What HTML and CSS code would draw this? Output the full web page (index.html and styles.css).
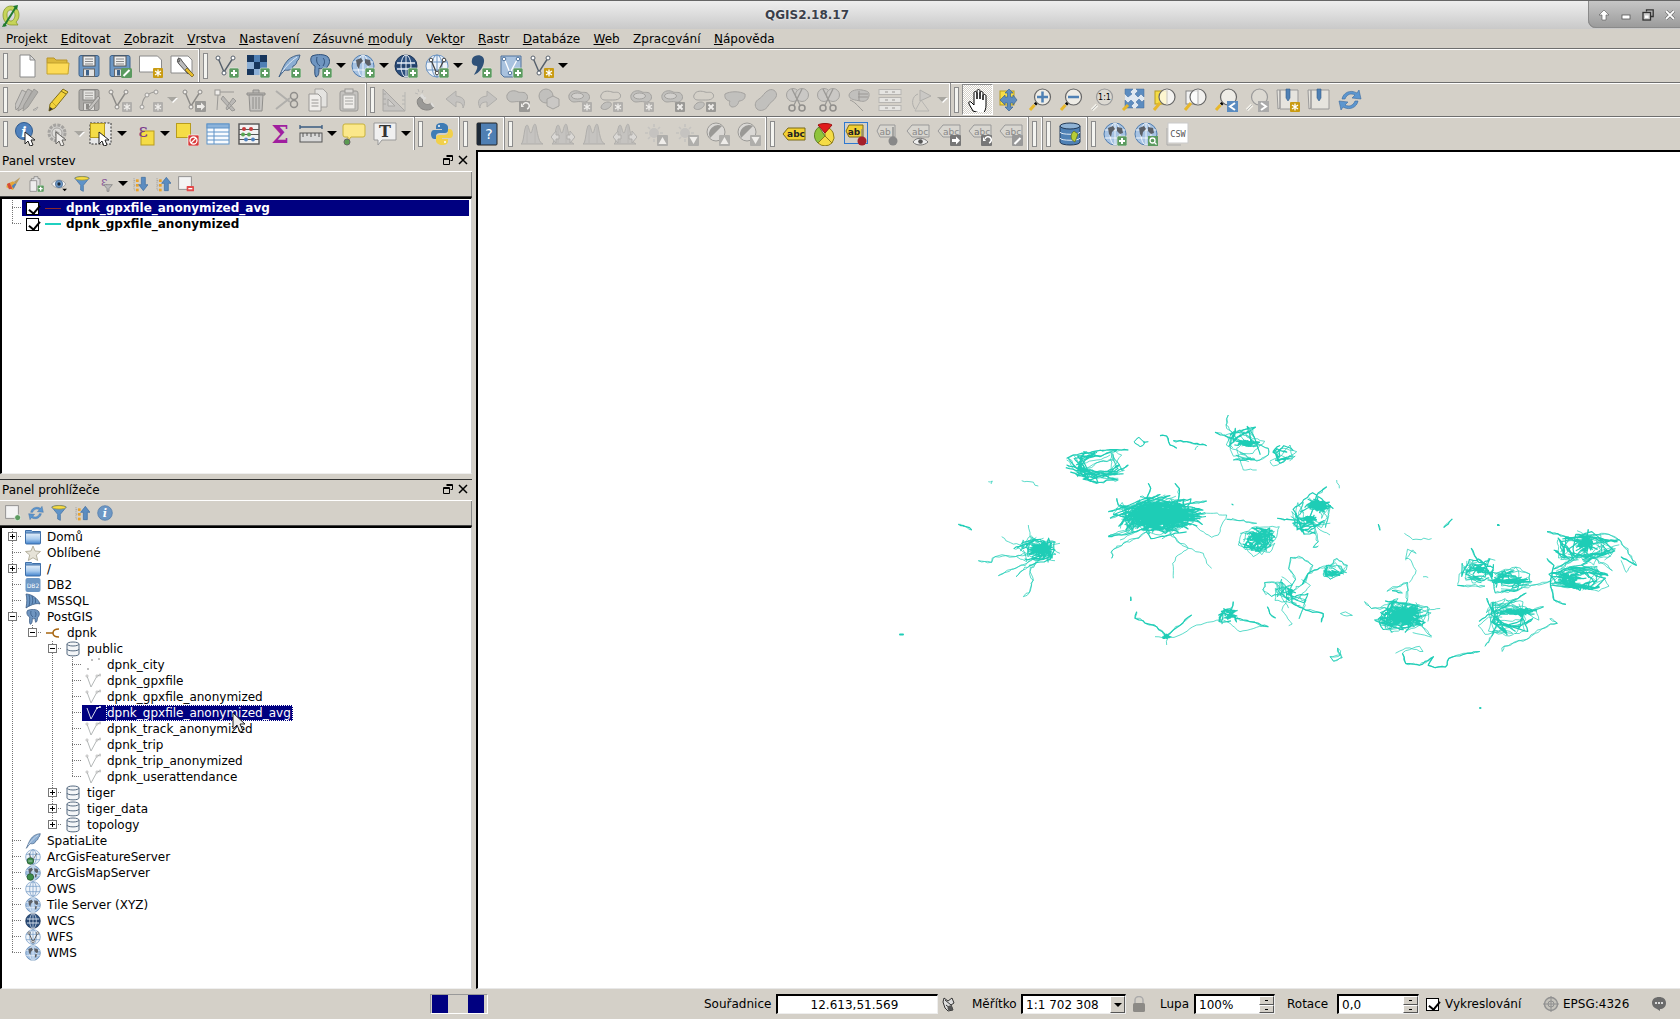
FILE: index.html
```html
<!DOCTYPE html>
<html lang="cs">
<head>
<meta charset="utf-8">
<title>QGIS2.18.17</title>
<link rel="stylesheet" href="styles.css">
</head>
<body>
<svg class="sprite" xmlns="http://www.w3.org/2000/svg">
<defs>
<symbol id="bplus" viewBox="0 0 24 24"><rect x="14" y="14" width="10" height="10" rx="1.5" fill="#5b9a5f" stroke="#e8efe8" stroke-width=".6"/><path d="M19 16v6M16 19h6" stroke="#fff" stroke-width="2"/></symbol>
<symbol id="bstar" viewBox="0 0 24 24"><rect x="14" y="14" width="10" height="10" rx="1" fill="#c99b12"/><path d="M19 15.5v7M16 17l6 4M22 17l-6 4" stroke="#fff" stroke-width="1.3"/></symbol>
<symbol id="bpen" viewBox="0 0 24 24"><rect x="13" y="14" width="11" height="10" rx="1.5" fill="#5b9a5f"/><path d="M15.5 22l6-6" stroke="#fff" stroke-width="2"/></symbol>
<symbol id="bx" viewBox="0 0 24 24"><rect x="14" y="14" width="10" height="10" rx="1" fill="#777"/><path d="M16.5 16.500l5 5M21.500 16.500l-5 5" stroke="#fff" stroke-width="2"/></symbol>
<symbol id="barrow" viewBox="0 0 24 24"><rect x="13" y="13" width="11" height="11" rx="1" fill="#777"/><path d="M15 17h4v-2.500l4 4-4 4V20h-4z" fill="#fff"/></symbol>
<symbol id="bundo" viewBox="0 0 24 24"><rect x="13" y="13" width="11" height="11" rx="1" fill="#777"/><path d="M21 21a3.200 3.200 0 1 0-4-4" fill="none" stroke="#fff" stroke-width="1.600"/><path d="M15 15v4h3z" fill="#fff"/></symbol>
<symbol id="bup" viewBox="0 0 24 24"><rect x="13" y="13" width="11" height="11" rx="1" fill="#999"/><path d="M18.500 15l4 7h-8z" fill="#fff"/></symbol>
<symbol id="bdown" viewBox="0 0 24 24"><rect x="13" y="13" width="11" height="11" rx="1" fill="#999"/><path d="M18.500 22l4-7h-8z" fill="#fff"/></symbol>
<symbol id="new" viewBox="0 0 24 24"><path d="M5 1h10l5 5v17H5z" fill="#fff" stroke="#8a8a8a"/><path d="M15 1v5h5z" fill="#ddd" stroke="#8a8a8a"/></symbol>
<symbol id="open" viewBox="0 0 24 24"><path d="M1 9V4h7l2 2h11v4z" fill="#dcb93c" stroke="#b8952a"/><path d="M1 20V9h22l-1 11z" fill="#fddb57" stroke="#c4a32e"/></symbol>
<symbol id="save" viewBox="0 0 24 24"><rect x="2" y="1.500" width="20" height="21" rx="2" fill="#6d97c4" stroke="#3f638b"/><rect x="6" y="2" width="12" height="10" fill="#eee" stroke="#555"/><path d="M8 5h8M8 7.500h8M8 10h8" stroke="#888"/><rect x="6.500" y="15" width="11" height="7.500" fill="#e2e2e2" stroke="#666"/><rect x="9" y="16" width="3" height="5.500" fill="#3f638b"/></symbol>
<symbol id="saveas" viewBox="0 0 24 24"><use href="#save"/><use href="#bpen"/></symbol>
<symbol id="compnew" viewBox="0 0 24 24"><path d="M0.500 2h18l4 4v12H.5z" fill="#fff" stroke="#8a8a8a"/><use href="#bstar"/></symbol>
<symbol id="compman" viewBox="0 0 24 24"><path d="M1 2h17l4 4v13H1z" fill="#fff" stroke="#8a8a8a"/><path d="M8 5a4 4 0 0 0 1 5l9 10 3-2-9-11a4 4 0 0 0-4-3l2 3-2 1z" fill="#bbb" stroke="#555"/><path d="M15 16l7 7 2-2-7-7z" fill="#e7bd2e" stroke="#6d5a17" stroke-width=".7"/></symbol>
<symbol id="vline" viewBox="0 0 24 24"><path d="M3 4l6 14 9-14" fill="none" stroke="#56606c" stroke-width="1.400"/><circle cx="3" cy="4" r="2" fill="#fff" stroke="#56606c"/><circle cx="9" cy="19" r="2" fill="#fff" stroke="#56606c"/><circle cx="18" cy="4" r="2" fill="#fff" stroke="#56606c"/></symbol>
<symbol id="vplus" viewBox="0 0 24 24"><use href="#vline"/><use href="#bplus"/></symbol>
<symbol id="vstar" viewBox="0 0 24 24"><use href="#vline"/><use href="#bstar"/></symbol>
<symbol id="varrow" viewBox="0 0 24 24"><use href="#vline"/><use href="#barrow"/></symbol>
<symbol id="raster" viewBox="0 0 24 24"><rect x="1" y="1" width="20" height="20" fill="#8db0d6"/><path d="M1 1h7v7H1zM14 1h7v7h-7zM8 8h6v7H8zM1 15h7v6H1z" fill="#17365d"/><path d="M8 1h6v7H8zM14 8h7v7h-7z" fill="#4f7fb4"/></symbol>
<symbol id="rasterp" viewBox="0 0 24 24"><use href="#raster"/><use href="#bplus"/></symbol>
<symbol id="feather" viewBox="0 0 24 24"><path d="M2 23C5 16 7 10 11 6c3-3 8-5 12-5-1 3-1 5-3 6 0 3-3 5-4 5 0 3-4 5-8 4-2 2-4 4-6 7z" fill="#8caed3" stroke="#39597f" stroke-width=".9"/><path d="M5 18c4-6 9-11 15-15" stroke="#dfe9f3" fill="none"/></symbol>
<symbol id="featherp" viewBox="0 0 24 24"><use href="#feather"/><use href="#bplus"/></symbol>
<symbol id="pg" viewBox="0 0 24 24"><path d="M4 2c5-2 13-2 16 1 3 4 1 8-1 10-1 3 0 6-3 7-1-2-1-4-1-6-2 1-3 1-4 0 0 4 0 8-3 9-2-2-1-8-1-11C4 11 1 6 4 2z" fill="#6f95c0" stroke="#2e4f78"/><path d="M9 3c-1 4 0 7 3 9M15 4c2 2 2 5 0 8" stroke="#2e4f78" fill="none"/></symbol>
<symbol id="pgp" viewBox="0 0 24 24"><use href="#pg"/><use href="#bplus"/></symbol>
<symbol id="globe" viewBox="0 0 24 24"><circle cx="12" cy="12" r="11" fill="#a7c3e3" stroke="#4f7cae"/><ellipse cx="12" cy="12" rx="5" ry="11" fill="none" stroke="#fff" stroke-width=".8"/><path d="M1.500 8h21M1.500 16h21M12 1v22" stroke="#fff" stroke-width=".8"/><path d="M5 6l5-2 2 3-3 3-1 5-2-3zM14 5l5 1 1 5-3 1-3-3zM15 14l3 0-1 4-2 1z" fill="#5b5f66"/></symbol>
<symbol id="globep" viewBox="0 0 24 24"><use href="#globe"/><use href="#bplus"/></symbol>
<symbol id="globedk" viewBox="0 0 24 24"><circle cx="12" cy="12" r="11" fill="#2c4f7d" stroke="#1d3557"/><path d="M2 12h20" stroke="#1d3557"/><path d="M3 9h18M3 15h18" stroke="#e6edf5" stroke-width="1.300"/><ellipse cx="12" cy="12" rx="5" ry="11" fill="none" stroke="#e6edf5"/><path d="M12 1v22" stroke="#e6edf5"/></symbol>
<symbol id="globedkp" viewBox="0 0 24 24"><use href="#globedk"/><use href="#bplus"/></symbol>
<symbol id="globew" viewBox="0 0 24 24"><circle cx="12" cy="12" r="11" fill="#eef3f9" stroke="#6d95c3"/><ellipse cx="12" cy="12" rx="5" ry="11" fill="none" stroke="#6d95c3"/><path d="M1.500 8h21M1.500 16h21M12 1v22" stroke="#6d95c3"/></symbol>
<symbol id="globev" viewBox="0 0 24 24"><use href="#globew"/><path d="M6 6l6 14 7-14" fill="none" stroke="#444" stroke-width="1.300"/><circle cx="6" cy="6" r="1.800" fill="#fff" stroke="#444"/><circle cx="12" cy="19" r="1.800" fill="#fff" stroke="#444"/><circle cx="19" cy="6" r="1.800" fill="#fff" stroke="#444"/></symbol>
<symbol id="globevp" viewBox="0 0 24 24"><use href="#globev"/><use href="#bplus"/></symbol>
<symbol id="comma" viewBox="0 0 24 24"><path d="M7 2c5-2 10 1 9 6-1 6-5 11-10 13 2-4 4-7 3-9-4 0-6-3-5-6 0-2 1-3 3-4z" fill="#2f5178"/></symbol>
<symbol id="commap" viewBox="0 0 24 24"><use href="#comma"/><use href="#bplus"/></symbol>
<symbol id="shield" viewBox="0 0 24 24"><path d="M2 2h20v15l-8 6H5l-3-3z" fill="#a9c2de" stroke="#50739c"/><path d="M5 4l6 15 8-15" fill="none" stroke="#fff" stroke-width="1.300"/><circle cx="5" cy="5" r="1.800" fill="#fff" stroke="#50739c"/><circle cx="11" cy="19" r="1.800" fill="#fff" stroke="#50739c"/><circle cx="19" cy="5" r="1.800" fill="#fff" stroke="#50739c"/></symbol>
<symbol id="shieldp" viewBox="0 0 24 24"><use href="#shield"/><use href="#bplus"/></symbol>
<symbol id="pencil" viewBox="0 0 24 24"><path d="M17 1l5 3-13 16-6 3 1-7z" fill="#f2d23c" stroke="#7e6d1d"/><path d="M15 3l5 3" stroke="#7e6d1d"/><path d="M6 14l4 4" stroke="#c5a723"/><path d="M3 23l1-4 3 2z" fill="#333"/></symbol>
<symbol id="pencils" viewBox="0 0 24 24"><path d="M13 1l4 2-9 17-5 3 0-6z" fill="#aaa" stroke="#777"/><path d="M19 1l4 3-10 15-5 4 1-6z" fill="#999" stroke="#777"/><path d="M7 2l4 2-7 15-3 3-1-5z" fill="#bbb" stroke="#777"/><path d="M18 22l5-3-2 3z" fill="#fff" stroke="#888"/></symbol>
<symbol id="savepen" viewBox="0 0 24 24"><use href="#save"/><path d="M23 10l-9 11-3 1 1-3 9-11z" fill="#bbb" stroke="#666"/></symbol>
<symbol id="curve" viewBox="0 0 24 24"><path d="M3 19c0-8 4-13 12-15" fill="none" stroke="#777" stroke-width="1.200"/><circle cx="3" cy="19" r="2" fill="#fff" stroke="#777"/><circle cx="8" cy="7" r="2" fill="#fff" stroke="#777"/><circle cx="17" cy="4" r="2" fill="#fff" stroke="#777"/><use href="#bstar"/></symbol>
<symbol id="nodetool" viewBox="0 0 24 24"><rect x="2" y="2" width="5" height="5" fill="#fff" stroke="#777"/><path d="M5 7l-1 15M7 4h14" stroke="#777" fill="none"/><path d="M10 8l12 14-3 1L8 11zM13 20l7-10 3 3-9 9z" fill="#aaa" stroke="#777"/></symbol>
<symbol id="trash" viewBox="0 0 24 24"><path d="M3 5h18v2H3zM9 5V2h6v3" fill="#aaa" stroke="#666"/><path d="M5 7h14l-1 16H6z" fill="#bbb" stroke="#666"/><path d="M9 9v12M12 9v12M15 9v12" stroke="#666"/></symbol>
<symbol id="scissors" viewBox="0 0 24 24"><path d="M1 3l14 11M1 21L15 10" stroke="#9a9a9a" stroke-width="2"/><circle cx="19" cy="8" r="3.500" fill="none" stroke="#666" stroke-width="1.500"/><circle cx="19" cy="16" r="3.500" fill="none" stroke="#666" stroke-width="1.500"/></symbol>
<symbol id="copy" viewBox="0 0 24 24"><path d="M9 1h8l4 4v14H9z" fill="#eee" stroke="#888"/><path d="M3 6h9l3 3v14H3z" fill="#fff" stroke="#777"/><path d="M5.500 12h7M5.500 15h7M5.500 18h7" stroke="#777"/></symbol>
<symbol id="paste" viewBox="0 0 24 24"><rect x="3" y="3" width="18" height="20" rx="2" fill="#bbb" stroke="#777"/><rect x="8" y="1" width="8" height="4" fill="#ddd" stroke="#777"/><rect x="6" y="7" width="12" height="14" fill="#fff" stroke="#888"/><path d="M8 10h8M8 13h8M8 16h8" stroke="#888"/></symbol>
<symbol id="tri" viewBox="0 0 24 24"><path d="M1 1v22h22z" fill="#c0bdb6" stroke="#8e8e8e"/><path d="M6 11v7h7z" fill="#d4d0c8" stroke="#8e8e8e"/><path d="M1 6h3M1 11h3M1 16h3" stroke="#8e8e8e"/><path d="M23 23V4" stroke="#a5a5a5"/><path d="M23 8h-3M23 12h-3M23 16h-3" stroke="#a5a5a5"/></symbol>
<symbol id="magnet" viewBox="0 0 24 24"><path d="M9 7l-4 4c-2 3 0 8 4 10 5 2 9 1 12-2l-3-4c-2 2-5 2-7 0-2-1-2-3-1-5l2-1z" fill="#777" stroke="#555"/><path d="M9 7l3 3-1 1-3-3zM21 19l-3-4" stroke="#e8e4dc" stroke-width="2"/><path d="M2 5l3 1M5 1l1 3M10 2l-1 3" stroke="#aaa"/></symbol>
<symbol id="undo" viewBox="0 0 24 24"><path d="M12 3L2 11l10 8v-5c4 0 7 1 7 6 3-6 2-11-7-12z" fill="#bbb" stroke="#999"/></symbol>
<symbol id="redo" viewBox="0 0 24 24"><path d="M12 3l10 8-10 8v-5c-4 0-7 1-7 6-3-6-2-11 7-12z" fill="#bbb" stroke="#999"/></symbol>
<symbol id="blob" viewBox="0 0 24 24"><path d="M1 7c2-5 8-5 11-3 3 1 7-1 9 3s-2 8-6 7-6 0-9 0-6-3-5-7z" fill="#b8b6b0" stroke="#868686"/></symbol>
<symbol id="ring" viewBox="0 0 24 24"><use href="#blob"/><ellipse cx="9.500" cy="8" rx="6" ry="3" fill="#d4d0c8" stroke="#868686"/></symbol>
<symbol id="two" viewBox="0 0 24 24"><path d="M2 7c2-5 8-4 11-3 3 1 6-1 8 2s-1 6-6 6-6 0-9 0-5-2-4-5z" fill="none" stroke="#868686"/><path d="M2 20c0-3 3-6 7-6s4 3 2 5-6 4-9 1z" fill="#b8b6b0" stroke="#868686"/></symbol>
<symbol id="blobu" viewBox="0 0 24 24"><use href="#blob"/><use href="#bundo"/></symbol>
<symbol id="hex" viewBox="0 0 24 24"><circle cx="9" cy="8" r="7" fill="#b8b6b0" stroke="#868686"/><path d="M10 11l6-3 6 3v7l-6 3-6-3z" fill="#c6c3bc" stroke="#868686"/></symbol>
<symbol id="ringstar" viewBox="0 0 24 24"><use href="#ring"/><use href="#bstar"/></symbol>
<symbol id="twostar" viewBox="0 0 24 24"><use href="#two"/><use href="#bstar"/></symbol>
<symbol id="ringx" viewBox="0 0 24 24"><use href="#ring"/><use href="#bx"/></symbol>
<symbol id="twox" viewBox="0 0 24 24"><use href="#two"/><use href="#bx"/></symbol>
<symbol id="blobt" viewBox="0 0 24 24"><path d="M2 6c5-3 15-3 20 0 1 5-3 7-6 7-1 4-3 6-7 6-3-1-3-4-2-6-3 0-6-3-5-7z" fill="#b8b6b0" stroke="#868686"/></symbol>
<symbol id="bean" viewBox="0 0 24 24"><path d="M3 21c-3-3-2-8 2-10s5-7 10-9 9 3 7 7-6 5-8 9-8 6-11 3z" fill="#b8b6b0" stroke="#868686"/></symbol>
<symbol id="cutb" viewBox="0 0 24 24"><circle cx="8" cy="7" r="6.500" fill="#c6c3bc" stroke="#868686"/><circle cx="17" cy="7" r="6.500" fill="#c6c3bc" stroke="#868686"/><path d="M7 1l8 16M17 1L9 17" stroke="#777" stroke-width="1.300"/><circle cx="7" cy="20" r="3" fill="none" stroke="#666" stroke-width="1.500"/><circle cx="17" cy="20" r="3" fill="none" stroke="#666" stroke-width="1.500"/></symbol>
<symbol id="split" viewBox="0 0 24 24"><path d="M2 7c1-5 9-6 13-5s8 1 7 6-5 6-9 5-11-1-11-6z" fill="#b8b6b0" stroke="#868686"/><path d="M3 12c5 2 7 5 13 11M12 3v10M11 6h10M11 9h10" stroke="#777" fill="none"/></symbol>
<symbol id="rows" viewBox="0 0 24 24"><rect x="1" y="1.500" width="22" height="5" fill="#f2f0ea" stroke="#a5a5a5"/><rect x="1" y="9.500" width="22" height="5" fill="#f2f0ea" stroke="#a5a5a5"/><rect x="1" y="17.500" width="22" height="5" fill="#f2f0ea" stroke="#a5a5a5"/><path d="M7 4h3M14 4h3M7 12h3M14 12h3M7 20h3M14 20h3" stroke="#777"/></symbol>
<symbol id="rotate" viewBox="0 0 24 24"><path d="M6 23h14L12 12z" fill="none" stroke="#a5a5a5"/><path d="M11 2v11l11-5z" fill="#c6c3bc" stroke="#999"/><path d="M9 6c-6 2-7 10-3 15" fill="none" stroke="#999"/></symbol>
<symbol id="hand" viewBox="0 0 24 24"><path d="M7 23l-4-7c-1-2 1-3 2-2l3 3V5c0-2 2-2 3 0v6-8c0-2 3-2 3 0v8-6c0-2 3-2 3 0v7-4c0-2 3-2 3 0v9c0 4-1 6-3 9z" fill="#fff" stroke="#000"/></symbol>
<symbol id="pan" viewBox="0 0 24 24"><rect x="3" y="3" width="14" height="14" fill="#f5dc46" stroke="#b89c1d"/><path d="M12 1l4 4h-2.500v4H16V7l4 5-4 5v-2h-2.500v4H16l-4 4-4-4h2.500v-4H8v2l-5-5 5-5v2h2.500V5H8z" fill="#5e8dbf" stroke="#3d6591" stroke-width=".7"/></symbol>
<symbol id="lens" viewBox="0 0 24 24"><circle cx="14.500" cy="9" r="8" fill="#eeece6" stroke="#666" stroke-width="1.200"/><path d="M8.500 15L7 16.500" stroke="#000" stroke-width="3"/><path d="M6.500 17L2 22" stroke="#e7b72b" stroke-width="3"/></symbol>
<symbol id="lensg" viewBox="0 0 24 24"><circle cx="14.500" cy="9" r="8" fill="#dcd9d2" stroke="#999" stroke-width="1.200"/><path d="M7 17L2 22" stroke="#f1efe8" stroke-width="3.500"/><path d="M7 17L2 22" stroke="#aaa" stroke-width=".8"/></symbol>
<symbol id="zin" viewBox="0 0 24 24"><use href="#lens"/><path d="M14.500 3.500v11M9 9h11" stroke="#4f81b5" stroke-width="2.500"/></symbol>
<symbol id="zout" viewBox="0 0 24 24"><use href="#lens"/><path d="M9 9h11" stroke="#4f81b5" stroke-width="2.500"/></symbol>
<symbol id="z11" viewBox="0 0 24 24"><use href="#lensg"/><text x="14.500" y="12" class="svgt" font-size="8">1:1</text></symbol>
<symbol id="full" viewBox="0 0 24 24"><rect x="4" y="1" width="19" height="19" fill="#dfe8f1"/><path d="M4 1h8l-3 3 2 2-4 3-3-3zM23 1v8l-3-3-3 3-3-3 3-3-2-2zM23 20h-8l3-3-3-3 3-3 3 3 2-2zM4 20v-8l3 3 3-3 3 3-3 3 2 2z" fill="#5b8cc0" stroke="#41689a" stroke-width=".5"/><path d="M7 17l-5 5" stroke="#e7b72b" stroke-width="3"/></symbol>
<symbol id="zsel" viewBox="0 0 24 24"><rect x="3" y="3" width="12" height="13" fill="#f5dc46" stroke="#b89c1d"/><circle cx="15" cy="9" r="8" fill="#fff" fill-opacity=".75" stroke="#666" stroke-width="1.200"/><path d="M15 1v16" stroke="#ccc"/><path d="M8 15l-6 7" stroke="#e7b72b" stroke-width="3"/></symbol>
<symbol id="zlay" viewBox="0 0 24 24"><rect x="3" y="3" width="12" height="13" fill="#f2f2f2" stroke="#888"/><circle cx="15" cy="9" r="8" fill="#fff" fill-opacity=".7" stroke="#666" stroke-width="1.200"/><path d="M15 1v16" stroke="#bbb"/><path d="M8 15l-6 7" stroke="#e7b72b" stroke-width="3"/></symbol>
<symbol id="zlast" viewBox="0 0 24 24"><use href="#lens"/><rect x="13" y="13" width="11" height="11" fill="#5b8cc0"/><path d="M21 15l-5 3.500 5 3.500" fill="none" stroke="#fff" stroke-width="2"/></symbol>
<symbol id="znext" viewBox="0 0 24 24"><use href="#lensg"/><rect x="13" y="13" width="11" height="11" fill="#aaa"/><path d="M16 15l5 3.500-5 3.500" fill="none" stroke="#fff" stroke-width="2"/></symbol>
<symbol id="bmark" viewBox="0 0 24 24"><path d="M1 2h3v18l-2 1zM4 2h18v19H4z" fill="#e6e4de" stroke="#999"/><path d="M10 1h4v9l-2 3-2-3z" fill="#4f81b5" stroke="#345c88" stroke-width=".6"/></symbol>
<symbol id="bmarkn" viewBox="0 0 24 24"><use href="#bmark"/><use href="#bstar"/></symbol>
<symbol id="refresh" viewBox="0 0 24 24"><path d="M4 11C5 5 12 1 19 5l2-3 2 9-9-1 3-3c-4-2-8-1-10 4zM20 13c-1 6-8 10-15 6l-2 3-2-9 9 1-3 3c4 2 8 1 10-4z" fill="#5c96cf" stroke="#3a6a9e" stroke-width=".6"/></symbol>
<symbol id="cursor" viewBox="0 0 24 24"><path d="M10 10v12l3-3 2 5 3-1-2-5h4z" fill="#fff" stroke="#222"/></symbol>
<symbol id="ident" viewBox="0 0 24 24"><circle cx="9" cy="9" r="8.500" fill="#4f81bd" stroke="#2f5b8f"/><text x="9" y="14.500" class="svgi" font-size="14">i</text><use href="#cursor"/></symbol>
<symbol id="gear" viewBox="0 0 24 24"><circle cx="11" cy="11" r="8" fill="#ccc" stroke="#888" stroke-width="3" stroke-dasharray="3 1.200"/><circle cx="11" cy="11" r="5" fill="#e5e3dd" stroke="#888"/><path d="M9 8l5 3-5 3z" fill="#888"/><use href="#cursor"/></symbol>
<symbol id="select" viewBox="0 0 24 24"><rect x="1" y="1" width="21" height="21" fill="#e8e8e8" stroke="#333" stroke-dasharray="2 1.500"/><rect x="1.500" y="1.500" width="14" height="14" fill="#f5dc46" stroke="#b89c1d"/><use href="#cursor"/></symbol>
<symbol id="eps" viewBox="0 0 24 24"><rect x="9" y="9" width="13" height="14" fill="#f5dc46" stroke="#b89c1d"/><text x="6.500" y="15" class="svgg" font-size="18" fill="#7b3a8c">ε</text></symbol>
<symbol id="desel" viewBox="0 0 24 24"><rect x="1.500" y="1.500" width="14" height="14" fill="#f5dc46" stroke="#b89c1d"/><rect x="13" y="13" width="11" height="11" rx="1" fill="#d83a3a" stroke="#fff" stroke-width=".6"/><circle cx="18.500" cy="18.500" r="3.500" fill="none" stroke="#fff" stroke-width="1.300"/><path d="M16 21l5-5" stroke="#fff" stroke-width="1.300"/></symbol>
<symbol id="table" viewBox="0 0 24 24"><rect x="1" y="2" width="22" height="20" fill="#f8fbfe" stroke="#5f93c8"/><rect x="1" y="2" width="22" height="4" fill="#8cb3da" stroke="#5f93c8"/><path d="M1 10h22M1 14h22M1 18h22M8 6v16" stroke="#5f93c8"/></symbol>
<symbol id="abacus" viewBox="0 0 24 24"><rect x="2" y="2" width="20" height="20" fill="#f2f2f2" stroke="#555" stroke-width="1.400"/><path d="M2 7.500h20M2 12.500h20M2 17.500h20" stroke="#555"/><g fill="#c63b3b"><circle cx="7" cy="7" r="2"/><circle cx="14" cy="7" r="2"/></g><g fill="#59a552"><circle cx="6" cy="12.500" r="2"/><circle cx="12" cy="12.500" r="2"/></g><g fill="#4f81bd"><circle cx="9" cy="17.500" r="2"/><circle cx="16" cy="17.500" r="2"/></g></symbol>
<symbol id="sigma" viewBox="0 0 24 24"><text x="12" y="21" class="svgg" text-anchor="middle" font-size="25" font-weight="700" fill="#a01e9f">Σ</text></symbol>
<symbol id="ruler" viewBox="0 0 24 24"><path d="M1 5h22M1 3v4M23 3v4" stroke="#3a5b80" stroke-width="1.300"/><rect x="1" y="11" width="22" height="9" fill="#d9d9d9" stroke="#555"/><path d="M4 11v4M8 11v3M12 11v4M16 11v3M20 11v4" stroke="#555"/></symbol>
<symbol id="balloon" viewBox="0 0 24 24"><path d="M3 2h18a2 2 0 0 1 2 2v9a2 2 0 0 1-2 2H9l-3 4 0-4H3a2 2 0 0 1-2-2V4a2 2 0 0 1 2-2z" fill="#fbe88a" stroke="#c7b13b"/><circle cx="5" cy="20" r="3" fill="#5a9a50" stroke="#666"/></symbol>
<symbol id="textann" viewBox="0 0 24 24"><path d="M1 1h22v17H9l-4 5v-5H1z" fill="#f0f0f0" stroke="#999"/><text x="12" y="15" class="svgs" text-anchor="middle" font-size="16" font-weight="700" fill="#333">T</text></symbol>
<symbol id="python" viewBox="0 0 24 24"><path d="M12 1c-5 0-6 2-6 4v2h6v1H4c-2 0-3 2-3 4s1 5 3 5h2v-3c0-2 2-3 4-3h5c2 0 3-1 3-3V5c0-2-3-4-6-4z" fill="#3f7cb5"/><path d="M12 23c5 0 6-2 6-4v-2h-6v-1h8c2 0 3-2 3-4s-1-5-3-5h-2v3c0 2-2 3-4 3H9c-2 0-3 1-3 3v3c0 2 3 4 6 4z" fill="#f1d04b"/><circle cx="9" cy="4" r="1" fill="#fff"/><circle cx="15" cy="20" r="1" fill="#fff"/></symbol>
<symbol id="help" viewBox="0 0 24 24"><rect x="2" y="1" width="20" height="22" rx="1" fill="#4f7fb3" stroke="#222"/><rect x="2" y="1" width="4" height="22" fill="#1e2a38"/><text x="14" y="17" class="svgt" font-size="14" fill="#fff">?</text></symbol>
<symbol id="hist" viewBox="0 0 24 24"><path d="M1 22c3 0 3-19 6-19 2 0 2 8 4 8 1 0 2-9 4-9s2 19 8 20z" fill="#bbb" stroke="#999"/><path d="M7 3v19M15 2v20" stroke="#aaa"/></symbol>
<symbol id="histg" viewBox="0 0 24 24"><use href="#hist"/><path d="M16 13h3V9l5 6-5 6v-4h-3zM8 13H5V9l-5 6 5 6v-4h3z" fill="#ddd" stroke="#999"/></symbol>
<symbol id="sun" viewBox="0 0 24 24"><circle cx="10" cy="11" r="5" fill="#bbb"/><path d="M10 2v3M10 17v3M1 11h3M16 11h3M4 5l2 2M14 15l2 2M4 17l2-2M14 7l2-2" stroke="#bbb" stroke-width="1.600"/></symbol>
<symbol id="sunu" viewBox="0 0 24 24"><use href="#sun"/><use href="#bup"/></symbol>
<symbol id="sund" viewBox="0 0 24 24"><use href="#sun"/><use href="#bdown"/></symbol>
<symbol id="contrast" viewBox="0 0 24 24"><circle cx="10" cy="10" r="9" fill="#ddd" stroke="#777"/><path d="M16 4a9 9 0 0 0-12 12z" fill="#777"/></symbol>
<symbol id="conu" viewBox="0 0 24 24"><use href="#contrast"/><use href="#bup"/></symbol>
<symbol id="cond" viewBox="0 0 24 24"><use href="#contrast"/><use href="#bdown"/></symbol>
<symbol id="abc" viewBox="0 0 24 24"><path d="M6 6h17v12H6l-5-6z" fill="#f2d033" stroke="#7a6a17"/><text x="14" y="15" class="svgt" font-size="9" font-weight="700" fill="#222">abc</text></symbol>
<symbol id="abcg" viewBox="0 0 24 24"><path d="M6 3h17v12H6l-5-6z" fill="#d8d6d0" stroke="#999"/><text x="14" y="12.500" class="svgt" font-size="9" fill="#888">abc</text></symbol>
<symbol id="abeye" viewBox="0 0 24 24"><use href="#abcg"/><path d="M7 20c3-5 11-5 15 0-4 4-12 4-15 0z" fill="#eee" stroke="#777"/><circle cx="14.500" cy="19.500" r="2.300" fill="#555"/></symbol>
<symbol id="abarr" viewBox="0 0 24 24"><use href="#abcg"/><use href="#barrow"/></symbol>
<symbol id="abrot" viewBox="0 0 24 24"><use href="#abcg"/><use href="#bundo"/></symbol>
<symbol id="abpen" viewBox="0 0 24 24"><use href="#abcg"/><rect x="13" y="13" width="11" height="11" rx="1" fill="#999"/><path d="M15.500 22l6-6" stroke="#fff" stroke-width="2"/></symbol>
<symbol id="pie" viewBox="0 0 24 24"><path d="M12 14V5a10 10 0 0 1 7 16l-7-7z" fill="#f5dc46" stroke="#8d7c1b"/><path d="M12 14l-7 7A10 10 0 0 1 6 5z" fill="#8fc43c" stroke="#5e8126"/><path d="M12 11L5 3c3-2 11-2 14 0z" fill="#e01b1b" stroke="#9a1111"/><path d="M5 21a10 10 0 0 0 14 0l-7-7z" fill="#f5dc46" stroke="#8d7c1b"/></symbol>
<symbol id="abpin" viewBox="0 0 24 24"><rect x="0.500" y="0.500" width="23" height="21" fill="none" stroke="#2f78d0"/><path d="M5 3h14v12H5L2 9z" fill="#f2d033" stroke="#7a6a17"/><text x="10" y="12.500" class="svgt" font-size="9" font-weight="700" fill="#222">ab</text><path d="M18 7v9" stroke="#888" stroke-width="1.300"/><circle cx="18" cy="19" r="4.500" fill="#a51f2a"/></symbol>
<symbol id="abping" viewBox="0 0 24 24"><path d="M5 3h15v12H5L2 9z" fill="#d8d6d0" stroke="#999"/><text x="10" y="12.500" class="svgt" font-size="9" fill="#888">ab</text><path d="M18 5v11" stroke="#888" stroke-width="1.300"/><circle cx="18" cy="19" r="4.500" fill="#888"/></symbol>
<symbol id="dbm" viewBox="0 0 24 24"><path d="M2 4v16c0 4 20 4 20 0V4z" fill="#4f81b5" stroke="#223b5a"/><ellipse cx="12" cy="4" rx="10" ry="3" fill="#8fb3d6" stroke="#223b5a"/><path d="M2 10c0 3 20 3 20 0M2 16c0 3 20 3 20 0" fill="none" stroke="#dfe9f3"/><path d="M16 9c-4 3-4 9 1 11l3-8z" fill="#b7cc36" stroke="#5a6a15" stroke-width=".7"/></symbol>
<symbol id="globes" viewBox="0 0 24 24"><use href="#globe"/><rect x="14" y="14" width="10" height="10" fill="#5b9a5f"/><circle cx="18.500" cy="18.500" r="2.500" fill="none" stroke="#fff" stroke-width="1.300"/><path d="M20 20l2.500 2.500" stroke="#fff" stroke-width="1.300"/></symbol>
<symbol id="csw" viewBox="0 0 24 24"><path d="M2 6v17h14" fill="none" stroke="#aaa"/><rect x="3" y="1" width="20" height="20" fill="#fff" stroke="#c9c9c9"/><text x="13" y="15" class="svgm" font-size="8.500">CSW</text></symbol>
<symbol id="brush" viewBox="0 0 24 24"><path d="M13 9l10-7-6 10z" fill="#b89b5f"/><path d="M3 12l9-4 5 4-5 9-10-4z" fill="#e5a536"/><path d="M3 12l4-2 4 9-5 1z" fill="#d64b3a"/><path d="M10 15l5-4 2 1-4 7z" fill="#4f81bd"/></symbol>
<symbol id="addgrp" viewBox="0 0 24 24"><path d="M9 1h6v3h3v16H5V4h4z" fill="#ddd" stroke="#777"/><path d="M3 7h10v16H3z" fill="#eee" stroke="#777"/><use href="#bplus"/></symbol>
<symbol id="eye" viewBox="0 0 24 24"><path d="M1 12c5-8 17-8 21 0-4 8-16 8-21 0z" fill="#f2f2f2" stroke="#888"/><circle cx="12" cy="12" r="5.500" fill="#6d97c4" stroke="#3f638b"/><circle cx="12" cy="12" r="2.500" fill="#1e2a38"/><path d="M17 19h7l-3.500 4z" fill="#000"/></symbol>
<symbol id="funnel" viewBox="0 0 24 24"><path d="M1 3c5-3 17-3 22 0l-9 11v9l-4-2v-7z" fill="#5f93c8" stroke="#3a6a9e"/><ellipse cx="12" cy="3.500" rx="10" ry="2.500" fill="#f5dc46" stroke="#b89c1d"/></symbol>
<symbol id="epsf" viewBox="0 0 24 24"><text x="6" y="15" class="svgg" font-size="19" fill="#8a5a9a">ε</text><path d="M10 13h13l-5 6v4h-3v-4z" fill="#bbb" stroke="#777"/></symbol>
<symbol id="expand" viewBox="0 0 24 24"><path d="M3 3v18M3 7h5M3 14h5M3 21h5" stroke="#999" stroke-dasharray="2 1"/><g fill="#e9a22a"><rect x="6" y="5" width="4" height="4"/><rect x="6" y="12" width="4" height="4"/><rect x="6" y="19" width="4" height="4"/></g><path d="M14 2h6v11h4l-7 9-7-9h4z" fill="#5b8cc0" stroke="#3a6a9e"/></symbol>
<symbol id="collapse" viewBox="0 0 24 24"><path d="M3 3v18M3 7h5M3 14h5M3 21h5" stroke="#999" stroke-dasharray="2 1"/><g fill="#e9a22a"><rect x="6" y="5" width="4" height="4"/><rect x="6" y="12" width="4" height="4"/><rect x="6" y="19" width="4" height="4"/></g><path d="M14 22h6V11h4L17 2l-7 9h4z" fill="#5b8cc0" stroke="#3a6a9e"/></symbol>
<symbol id="layrm" viewBox="0 0 24 24"><rect x="1" y="1" width="19" height="19" fill="#f4f4f4" stroke="#888" stroke-width="1.300"/><rect x="13" y="15" width="11" height="8" rx="1" fill="#e24a4a"/><path d="M15.500 19h6" stroke="#fff" stroke-width="2"/></symbol>
<symbol id="addbr" viewBox="0 0 24 24"><rect x="1" y="1" width="19" height="19" fill="#f4f4f4" stroke="#888" stroke-width="1.300"/><circle cx="19" cy="19" r="4.500" fill="#5b9a5f" stroke="#fff"/></symbol>
<symbol id="info" viewBox="0 0 24 24"><circle cx="12" cy="12" r="11" fill="#6d97c4" stroke="#4a76a8"/><text x="12" y="18" class="svgi" font-size="17">i</text></symbol>
<symbol id="fld" viewBox="0 0 16 16"><path d="M.5 4V1.500h6l1 1h8V6H.5z" fill="#7aa8d8" stroke="#3f6fa8"/><rect x=".5" y="4" width="15" height="11" rx="1" fill="url(#fldg)" stroke="#3f6fa8"/></symbol>
<linearGradient id="fldg" x1="0" y1="0" x2="0" y2="1"><stop offset="0" stop-color="#e6f0fa"/><stop offset=".55" stop-color="#a9cbee"/><stop offset="1" stop-color="#3f81cc"/></linearGradient>
<symbol id="star" viewBox="0 0 16 16"><path d="M8 1l2 5 5.500.5-4.200 3.500 1.400 5.500L8 12.700 3.300 15.500 4.700 10 .5 6.500 6 6z" fill="#e6e3d8" stroke="#b5b19f"/></symbol>
<symbol id="db2" viewBox="0 0 16 16"><rect x=".5" y="1" width="15" height="14" rx="2" fill="#6d97c4"/><text x="8" y="10.500" class="svgt" font-size="6" fill="#fff">DB2</text></symbol>
<symbol id="mssql" viewBox="0 0 16 16"><path d="M1 15C2 9 2 5 1 1c5 0 12 4 14 10-3-1-8 0-14 4z" fill="#6d97c4" stroke="#2e4f78" stroke-width=".7"/><path d="M4 2c1 3 1 7 0 11M7 3c1 3 1 6 0 8M10 5c.700 2 .700 4 .300 5" stroke="#2e4f78" fill="none" stroke-width=".7"/></symbol>
<symbol id="conn" viewBox="0 0 16 16"><path d="M1 8h7M14 4c-4 0-6 2-6 4s2 4 6 4" fill="none" stroke="#a8650f" stroke-width="1.500"/></symbol>
<symbol id="schema" viewBox="0 0 16 16"><path d="M2 3v10c0 2.500 12 2.500 12 0V3" fill="#f4f6f8" stroke="#566a80"/><ellipse cx="8" cy="3" rx="6" ry="2" fill="#f4f6f8" stroke="#566a80"/><path d="M2 8c0 2.500 12 2.500 12 0" fill="none" stroke="#566a80"/></symbol>
<symbol id="pts" viewBox="0 0 16 16"><circle cx="3" cy="12" r="1" fill="#aaa"/><circle cx="7" cy="3" r="1" fill="#aaa"/><circle cx="14" cy="2" r="1" fill="#aaa"/></symbol>
<symbol id="vthin" viewBox="0 0 16 16"><path d="M2 3l4 11 6-11 3-1" fill="none" stroke="#b4b8b8"/><circle cx="2" cy="3" r="1.100" fill="#fff" stroke="#999" stroke-width=".6"/><circle cx="12" cy="3" r="1.100" fill="#fff" stroke="#999" stroke-width=".6"/><circle cx="15" cy="2" r="1" fill="#fff" stroke="#999" stroke-width=".6"/></symbol>
<symbol id="vthins" viewBox="0 0 16 16"><path d="M2 3l4 11 6-11 3-1" fill="none" stroke="#d8dbe8"/><circle cx="12" cy="3" r="1" fill="#fff"/><circle cx="15" cy="2" r="1" fill="#fff"/></symbol>
<symbol id="gfs" viewBox="0 0 24 24"><use href="#globew"/><path d="M6 6l5 12 7-12" fill="none" stroke="#555"/><circle cx="8" cy="18" r="5" fill="#3e8d4b" stroke="#1d4b28"/><path d="M5 18h6" stroke="#e0e8f0"/></symbol>
<symbol id="gms" viewBox="0 0 24 24"><use href="#globe"/><circle cx="8" cy="18" r="5" fill="#3e8d4b" stroke="#1d4b28"/></symbol>
<symbol id="floatb" viewBox="0 0 10 10"><path d="M3.500 .5h6v5h-2M.5 3.500h6v6h-6z" fill="none" stroke="#000"/><path d="M3.500 1.500h6M.5 4.500h6" stroke="#000"/></symbol>
<symbol id="closeb" viewBox="0 0 10 10"><path d="M1 1l8 8M9 1l-8 8" stroke="#000" stroke-width="1.500"/></symbol>
<symbol id="wup" viewBox="0 0 12 12"><path d="M6 1l5 5H8v5H4V6H1z" fill="#fff" stroke="#555" stroke-width=".6"/></symbol>
<symbol id="wmin" viewBox="0 0 12 12"><rect x="2" y="6" width="8" height="4" fill="#fff" stroke="#555" stroke-width=".8"/></symbol>
<symbol id="wres" viewBox="0 0 12 12"><path d="M4.500 2.500V.8h6.700v6.700H9" fill="none" stroke="#333" stroke-width="1.300"/><rect x="1" y="3.500" width="7.500" height="7.500" fill="#dedede" fill-opacity=".6" stroke="#333" stroke-width="1.300"/><rect x="3" y="6.500" width="3.500" height="2.500" fill="#fff"/></symbol>
<symbol id="wclose" viewBox="0 0 12 12"><path d="M2 2l8 8M10 2l-8 8" stroke="#555" stroke-width="3"/><path d="M2 2l8 8M10 2l-8 8" stroke="#fff" stroke-width="1.800"/></symbol>
<symbol id="logo" viewBox="0 0 18 24"><path d="M9 2C4 2 1 6 1 11c0 6 4 10 8 10h7l-2-3c2-2 3-4 3-7 0-5-3-9-8-9zm0 4c2 0 4 2 4 5s-2 6-4 6-4-2-4-6 2-5 4-5z" fill="#c6d45a" stroke="#7e8f22" stroke-width=".7"/><path d="M2 22L14 3" stroke="#1f7a2f" stroke-width="2"/><path d="M16 1l-5 1 4 4zM0 23l2-4 3 3z" fill="#1f7a2f"/></symbol>
<symbol id="mouseic" viewBox="0 0 16 16"><path d="M3 2l4 3 4-3 2 5-3 2 2 5-5 1-3-3-2-6z" fill="#ddd" stroke="#333"/><path d="M5 9l5 4M4 4l6 5" stroke="#333"/><circle cx="9" cy="12" r="2.500" fill="#555"/></symbol>
<symbol id="lock" viewBox="0 0 16 16"><path d="M4 7V4a4 3.500 0 0 1 8 0v3" fill="none" stroke="#aaa" stroke-width="1.500"/><rect x="2" y="7" width="12" height="9" rx="1.500" fill="#8c8a86"/></symbol>
<symbol id="crs" viewBox="0 0 16 16"><circle cx="8" cy="8" r="6.500" fill="#c5c3bc" stroke="#909090" stroke-width="1.400"/><path d="M8 0v16M0 8h16" stroke="#909090"/><circle cx="8" cy="8" r="3" fill="none" stroke="#909090"/></symbol>
<symbol id="chat" viewBox="0 0 16 16"><path d="M8 1c4 0 7 2 7 6s-3 6-6 6v2l-3-2c-3-1-5-3-5-6 0-4 3-6 7-6z" fill="#6b6b6b"/><circle cx="5" cy="7" r="1" fill="#fff"/><circle cx="8" cy="7" r="1" fill="#fff"/><circle cx="11" cy="7" r="1" fill="#fff"/></symbol>
</defs>
</svg>

<div class="app">
  <header class="titlebar">
    <svg class="logo"><use href="#logo"/></svg>
    <span class="wintitle">QGIS2.18.17</span>
    <div class="winctl">
      <svg class="wcs"><use href="#wup"/></svg>
      <svg class="wcs"><use href="#wmin"/></svg>
      <svg class="wcs"><use href="#wres"/></svg>
      <svg class="wcs"><use href="#wclose"/></svg>
    </div>
  </header>
  <nav class="menubar">
    <span>Pro<u>j</u>ekt</span><span><u>E</u>ditovat</span><span><u>Z</u>obrazit</span><span><u>V</u>rstva</span><span><u>N</u>astavení</span><span>Zásuvné <u>m</u>oduly</span><span>Vekt<u>o</u>r</span><span><u>R</u>astr</span><span><u>D</u>atabáze</span><span><u>W</u>eb</span><span>Zprac<u>o</u>vání</span><span><u>N</u>ápověda</span>
  </nav>

  <div class="tbrow">
    <div class="tb">
      <i class="grip"></i>
      <i class="btn"><svg class="ic"><use href="#new"/></svg></i>
      <i class="btn"><svg class="ic"><use href="#open"/></svg></i>
      <i class="btn"><svg class="ic"><use href="#save"/></svg></i>
      <i class="btn"><svg class="ic"><use href="#saveas"/></svg></i>
      <i class="btn"><svg class="ic"><use href="#compnew"/></svg></i>
      <i class="btn"><svg class="ic"><use href="#compman"/></svg></i>
    </div>
    <div class="tb tb-last">
      <i class="grip"></i>
      <i class="btn"><svg class="ic"><use href="#vplus"/></svg></i>
      <i class="btn"><svg class="ic"><use href="#rasterp"/></svg></i>
      <i class="btn"><svg class="ic"><use href="#featherp"/></svg></i>
      <i class="btn"><svg class="ic"><use href="#pgp"/></svg></i><i class="arr"></i>
      <i class="btn"><svg class="ic"><use href="#globep"/></svg></i><i class="arr"></i>
      <i class="btn"><svg class="ic"><use href="#globedkp"/></svg></i>
      <i class="btn"><svg class="ic"><use href="#globevp"/></svg></i><i class="arr"></i>
      <i class="btn"><svg class="ic"><use href="#commap"/></svg></i>
      <i class="btn"><svg class="ic"><use href="#shieldp"/></svg></i>
      <i class="btn"><svg class="ic"><use href="#vstar"/></svg></i><i class="arr"></i>
    </div>
  </div>

  <div class="tbrow">
    <div class="tb off">
      <i class="grip"></i>
      <i class="btn"><svg class="ic"><use href="#pencils"/></svg></i>
      <i class="btn on"><svg class="ic"><use href="#pencil"/></svg></i>
      <i class="btn"><svg class="ic"><use href="#savepen"/></svg></i>
      <i class="btn"><svg class="ic"><use href="#vstar"/></svg></i>
      <i class="btn"><svg class="ic"><use href="#curve"/></svg></i><i class="arr arr-off"></i>
      <i class="btn"><svg class="ic"><use href="#varrow"/></svg></i>
      <i class="btn"><svg class="ic"><use href="#nodetool"/></svg></i>
      <i class="btn"><svg class="ic"><use href="#trash"/></svg></i>
      <i class="btn"><svg class="ic"><use href="#scissors"/></svg></i>
      <i class="btn"><svg class="ic"><use href="#copy"/></svg></i>
      <i class="btn"><svg class="ic"><use href="#paste"/></svg></i>
    </div>
    <div class="tb off">
      <i class="grip"></i>
      <i class="btn"><svg class="ic"><use href="#tri"/></svg></i>
      <i class="btn"><svg class="ic"><use href="#magnet"/></svg></i>
      <i class="btn"><svg class="ic"><use href="#undo"/></svg></i>
      <i class="btn"><svg class="ic"><use href="#redo"/></svg></i>
      <i class="btn"><svg class="ic"><use href="#blobu"/></svg></i>
      <i class="btn"><svg class="ic"><use href="#hex"/></svg></i>
      <i class="btn"><svg class="ic"><use href="#ringstar"/></svg></i>
      <i class="btn"><svg class="ic"><use href="#twostar"/></svg></i>
      <i class="btn"><svg class="ic"><use href="#ringstar"/></svg></i>
      <i class="btn"><svg class="ic"><use href="#ringx"/></svg></i>
      <i class="btn"><svg class="ic"><use href="#twox"/></svg></i>
      <i class="btn"><svg class="ic"><use href="#blobt"/></svg></i>
      <i class="btn"><svg class="ic"><use href="#bean"/></svg></i>
      <i class="btn"><svg class="ic"><use href="#cutb"/></svg></i>
      <i class="btn"><svg class="ic"><use href="#cutb"/></svg></i>
      <i class="btn"><svg class="ic"><use href="#split"/></svg></i>
      <i class="btn"><svg class="ic"><use href="#rows"/></svg></i>
      <i class="btn"><svg class="ic"><use href="#rotate"/></svg></i><i class="arr arr-off"></i>
    </div>
    <div class="tb tb-last">
      <i class="grip"></i>
      <i class="btn pressed"><svg class="ic"><use href="#hand"/></svg></i>
      <i class="btn"><svg class="ic"><use href="#pan"/></svg></i>
      <i class="btn"><svg class="ic"><use href="#zin"/></svg></i>
      <i class="btn"><svg class="ic"><use href="#zout"/></svg></i>
      <i class="btn"><svg class="ic"><use href="#z11"/></svg></i>
      <i class="btn"><svg class="ic"><use href="#full"/></svg></i>
      <i class="btn"><svg class="ic"><use href="#zsel"/></svg></i>
      <i class="btn"><svg class="ic"><use href="#zlay"/></svg></i>
      <i class="btn"><svg class="ic"><use href="#zlast"/></svg></i>
      <i class="btn"><svg class="ic"><use href="#znext"/></svg></i>
      <i class="btn"><svg class="ic"><use href="#bmarkn"/></svg></i>
      <i class="btn"><svg class="ic"><use href="#bmark"/></svg></i>
      <i class="btn"><svg class="ic"><use href="#refresh"/></svg></i>
    </div>
  </div>

  <div class="tbrow">
    <div class="tb">
      <i class="grip"></i>
      <i class="btn"><svg class="ic"><use href="#ident"/></svg></i>
      <i class="btn off1"><svg class="ic"><use href="#gear"/></svg></i><i class="arr arr-off"></i>
      <i class="btn"><svg class="ic"><use href="#select"/></svg></i><i class="arr"></i>
      <i class="btn"><svg class="ic"><use href="#eps"/></svg></i><i class="arr"></i>
      <i class="btn"><svg class="ic"><use href="#desel"/></svg></i>
      <i class="btn"><svg class="ic"><use href="#table"/></svg></i>
      <i class="btn"><svg class="ic"><use href="#abacus"/></svg></i>
      <i class="btn"><svg class="ic"><use href="#sigma"/></svg></i>
      <i class="btn"><svg class="ic"><use href="#ruler"/></svg></i><i class="arr"></i>
      <i class="btn"><svg class="ic"><use href="#balloon"/></svg></i>
      <i class="btn"><svg class="ic"><use href="#textann"/></svg></i><i class="arr"></i>
    </div>
    <div class="tb"><i class="grip"></i><i class="btn"><svg class="ic"><use href="#python"/></svg></i></div>
    <div class="tb"><i class="grip"></i><i class="btn"><svg class="ic"><use href="#help"/></svg></i></div>
    <div class="tb off">
      <i class="grip"></i>
      <i class="btn"><svg class="ic"><use href="#hist"/></svg></i>
      <i class="btn"><svg class="ic"><use href="#histg"/></svg></i>
      <i class="btn"><svg class="ic"><use href="#hist"/></svg></i>
      <i class="btn"><svg class="ic"><use href="#histg"/></svg></i>
      <i class="btn"><svg class="ic"><use href="#sunu"/></svg></i>
      <i class="btn"><svg class="ic"><use href="#sund"/></svg></i>
      <i class="btn"><svg class="ic"><use href="#conu"/></svg></i>
      <i class="btn"><svg class="ic"><use href="#cond"/></svg></i>
    </div>
    <div class="tb">
      <i class="grip"></i>
      <i class="btn"><svg class="ic"><use href="#abc"/></svg></i>
      <i class="btn"><svg class="ic"><use href="#pie"/></svg></i>
      <i class="btn"><svg class="ic"><use href="#abpin"/></svg></i>
      <i class="btn"><svg class="ic"><use href="#abping"/></svg></i>
      <i class="btn"><svg class="ic"><use href="#abeye"/></svg></i>
      <i class="btn"><svg class="ic"><use href="#abarr"/></svg></i>
      <i class="btn"><svg class="ic"><use href="#abrot"/></svg></i>
      <i class="btn"><svg class="ic"><use href="#abpen"/></svg></i>
    </div>
    <div class="tb"><i class="grip"></i></div>
    <div class="tb"><i class="grip"></i><i class="btn"><svg class="ic"><use href="#dbm"/></svg></i></div>
    <div class="tb tb-last">
      <i class="grip"></i>
      <i class="btn"><svg class="ic"><use href="#globep"/></svg></i>
      <i class="btn"><svg class="ic"><use href="#globes"/></svg></i>
      <i class="btn"><svg class="ic"><use href="#csw"/></svg></i>
    </div>
  </div>

  <main class="workspace">
    <aside class="dock">
      <section class="panel panel-layers">
        <div class="ptitle"><span>Panel vrstev</span><svg class="pbtn"><use href="#floatb"/></svg><svg class="pbtn"><use href="#closeb"/></svg></div>
        <div class="ptools">
          <i class="pb"><svg class="i16"><use href="#brush"/></svg></i>
          <i class="pb"><svg class="i16"><use href="#addgrp"/></svg></i>
          <i class="pb"><svg class="i16"><use href="#eye"/></svg></i>
          <i class="pb"><svg class="i16"><use href="#funnel"/></svg></i>
          <i class="pb"><svg class="i16"><use href="#epsf"/></svg></i><i class="arr parr"></i>
          <i class="pb"><svg class="i16"><use href="#expand"/></svg></i>
          <i class="pb"><svg class="i16"><use href="#collapse"/></svg></i>
          <i class="pb"><svg class="i16"><use href="#layrm"/></svg></i>
        </div>
        <div class="tree tree-layers">
          <div class="row"><span class="c tee"></span><div class="lay sel"><i class="chk"></i><i class="sym sym-r"></i><b>dpnk_gpxfile_anonymized_avg</b></div></div>
          <div class="row"><span class="c end"></span><div class="lay"><i class="chk"></i><i class="sym sym-t"></i><b>dpnk_gpxfile_anonymized</b></div></div>
        </div>
      </section>
      <section class="panel panel-browser">
        <div class="ptitle"><span>Panel prohlížeče</span><svg class="pbtn"><use href="#floatb"/></svg><svg class="pbtn"><use href="#closeb"/></svg></div>
        <div class="ptools">
          <i class="pb"><svg class="i16"><use href="#addbr"/></svg></i>
          <i class="pb"><svg class="i16"><use href="#refresh"/></svg></i>
          <i class="pb"><svg class="i16"><use href="#funnel"/></svg></i>
          <i class="pb"><svg class="i16"><use href="#collapse"/></svg></i>
          <i class="pb"><svg class="i16"><use href="#info"/></svg></i>
        </div>
        <div class="tree tree-browser">
          <div class="row"><span class="c tee"><i class="exp plus"></i></span><span class="it"><svg class="i16"><use href="#fld"/></svg><span>Domů</span></span></div>
          <div class="row"><span class="c tee"></span><span class="it"><svg class="i16"><use href="#star"/></svg><span>Oblíbené</span></span></div>
          <div class="row"><span class="c tee"><i class="exp plus"></i></span><span class="it"><svg class="i16"><use href="#fld"/></svg><span>/</span></span></div>
          <div class="row"><span class="c tee"></span><span class="it"><svg class="i16"><use href="#db2"/></svg><span>DB2</span></span></div>
          <div class="row"><span class="c tee"></span><span class="it"><svg class="i16"><use href="#mssql"/></svg><span>MSSQL</span></span></div>
          <div class="row"><span class="c tee"><i class="exp minus"></i></span><span class="it"><svg class="i16"><use href="#pg"/></svg><span>PostGIS</span></span></div>
          <div class="row"><span class="c g"></span><span class="c end"><i class="exp minus"></i></span><span class="it"><svg class="i16"><use href="#conn"/></svg><span>dpnk</span></span></div>
          <div class="row"><span class="c g"></span><span class="c"></span><span class="c tee"><i class="exp minus"></i></span><span class="it"><svg class="i16"><use href="#schema"/></svg><span>public</span></span></div>
          <div class="row"><span class="c g"></span><span class="c"></span><span class="c g"></span><span class="c tee"></span><span class="it"><svg class="i16"><use href="#pts"/></svg><span>dpnk_city</span></span></div>
          <div class="row"><span class="c g"></span><span class="c"></span><span class="c g"></span><span class="c tee"></span><span class="it"><svg class="i16"><use href="#vthin"/></svg><span>dpnk_gpxfile</span></span></div>
          <div class="row"><span class="c g"></span><span class="c"></span><span class="c g"></span><span class="c tee"></span><span class="it"><svg class="i16"><use href="#vthin"/></svg><span>dpnk_gpxfile_anonymized</span></span></div>
          <div class="row"><span class="c g"></span><span class="c"></span><span class="c g"></span><span class="c tee"></span><span class="it it-sel"><svg class="i16"><use href="#vthins"/></svg><span class="focus">dpnk_gpxfile_anonymized_avg</span></span></div>
          <div class="row"><span class="c g"></span><span class="c"></span><span class="c g"></span><span class="c tee"></span><span class="it"><svg class="i16"><use href="#vthin"/></svg><span>dpnk_track_anonymized</span></span></div>
          <div class="row"><span class="c g"></span><span class="c"></span><span class="c g"></span><span class="c tee"></span><span class="it"><svg class="i16"><use href="#vthin"/></svg><span>dpnk_trip</span></span></div>
          <div class="row"><span class="c g"></span><span class="c"></span><span class="c g"></span><span class="c tee"></span><span class="it"><svg class="i16"><use href="#vthin"/></svg><span>dpnk_trip_anonymized</span></span></div>
          <div class="row"><span class="c g"></span><span class="c"></span><span class="c g"></span><span class="c end"></span><span class="it"><svg class="i16"><use href="#vthin"/></svg><span>dpnk_userattendance</span></span></div>
          <div class="row"><span class="c g"></span><span class="c"></span><span class="c tee"><i class="exp plus"></i></span><span class="it"><svg class="i16"><use href="#schema"/></svg><span>tiger</span></span></div>
          <div class="row"><span class="c g"></span><span class="c"></span><span class="c tee"><i class="exp plus"></i></span><span class="it"><svg class="i16"><use href="#schema"/></svg><span>tiger_data</span></span></div>
          <div class="row"><span class="c g"></span><span class="c"></span><span class="c end"><i class="exp plus"></i></span><span class="it"><svg class="i16"><use href="#schema"/></svg><span>topology</span></span></div>
          <div class="row"><span class="c tee"></span><span class="it"><svg class="i16"><use href="#feather"/></svg><span>SpatiaLite</span></span></div>
          <div class="row"><span class="c tee"></span><span class="it"><svg class="i16"><use href="#gfs"/></svg><span>ArcGisFeatureServer</span></span></div>
          <div class="row"><span class="c tee"></span><span class="it"><svg class="i16"><use href="#gms"/></svg><span>ArcGisMapServer</span></span></div>
          <div class="row"><span class="c tee"></span><span class="it"><svg class="i16"><use href="#globew"/></svg><span>OWS</span></span></div>
          <div class="row"><span class="c tee"></span><span class="it"><svg class="i16"><use href="#globe"/></svg><span>Tile Server (XYZ)</span></span></div>
          <div class="row"><span class="c tee"></span><span class="it"><svg class="i16"><use href="#globedk"/></svg><span>WCS</span></span></div>
          <div class="row"><span class="c tee"></span><span class="it"><svg class="i16"><use href="#globev"/></svg><span>WFS</span></span></div>
          <div class="row"><span class="c end"></span><span class="it"><svg class="i16"><use href="#globe"/></svg><span>WMS</span></span></div>
          <svg class="mouse" viewBox="0 0 14 21"><path d="M1 1v16l4-4 3 7 3-1-3-7h5z" fill="#eee" stroke="#222"/></svg>
        </div>
      </section>
    </aside>
    <div class="map"><svg class="tracks" id="tracks" viewBox="478 152 1202 837" preserveAspectRatio="xMinYMin meet"></svg></div>
  </main>

  <footer class="status">
    <div class="pause"><i></i><i></i></div>
    <span class="lbl l-coord">Souřadnice</span>
    <span class="field f-coord">12.613,51.569</span>
    <svg class="i16 s-mouse"><use href="#mouseic"/></svg>
    <span class="lbl l-scale">Měřítko</span>
    <span class="field f-scale">1:1 702 308<i class="cbtn"></i></span>
    <svg class="i16 s-lock"><use href="#lock"/></svg>
    <span class="lbl l-mag">Lupa</span>
    <span class="field f-spin f-mag">100%<i class="spin"><i></i><i></i></i></span>
    <span class="lbl l-rot">Rotace</span>
    <span class="field f-spin f-rot">0,0<i class="spin"><i></i><i></i></i></span>
    <i class="chk s-chk"></i>
    <span class="lbl l-rend">Vykreslování</span>
    <svg class="i16 s-crs"><use href="#crs"/></svg>
    <span class="lbl l-epsg">EPSG:4326</span>
    <svg class="i16 s-chat"><use href="#chat"/></svg>
  </footer>
</div>
<script src="map.js"></script>
</body>
</html>
```
FILE: styles.css
```css
* { box-sizing: border-box; }
html, body { margin: 0; padding: 0; }
body {
  width: 1680px; height: 1019px; overflow: hidden;
  background: #d4d0c8; color: #000;
  font: 12px/16px "DejaVu Sans", sans-serif;
}
.sprite { position: absolute; width: 0; height: 0; }
i { font-style: normal; display: block; }
.app { display: flex; flex-direction: column; height: 1019px; }

.titlebar {
  height: 29px; flex: none; position: relative;
  border-top: 1px solid #666;
  background: linear-gradient(#eeeeee, #c9c9c9);
  display: flex; align-items: center; justify-content: center;
  padding-right: 66px;
}
.logo { position: absolute; left: 2px; top: 3px; width: 18px; height: 24px; }
.wintitle { font-weight: 700; color: #3a3f4a; text-shadow: 0 0 2px #fff; }
.winctl {
  position: absolute; right: 0; top: 0; width: 92px; height: 27px;
  border-bottom-left-radius: 8px; padding: 0 0 0 10px;
  background: linear-gradient(#c6c6c6, #9a9a9a);
  box-shadow: inset 1px 0 #8a8a8a, inset 0 -1px #8a8a8a;
  display: flex; align-items: center; gap: 10px;
}
.wcs { width: 12px; height: 12px; flex: none; }

.menubar { height: 19px; flex: none; display: flex; gap: 13.4px; padding-left: 6px; align-items: center; white-space: nowrap; }

.tbrow {
  height: 34px; flex: none; display: flex;
  border-top: 1px solid #6e6e6e;
  box-shadow: inset 0 1px #fff;
}
.tb {
  display: flex; align-items: center; flex: none;
  padding: 0 2px 0 3px;
  border-right: 1px solid #8c8c8c;
  box-shadow: inset -1px 1px #fff;
}
.tb-last { border-right: 0; box-shadow: none; flex: 1; }
.grip {
  width: 5px; height: 26px; margin-right: 3px; flex: none;
  border: 1px solid #8c8c8c; background: #f4f4f0;
}
.btn { width: 31px; height: 31px; flex: none; display: flex; align-items: center; justify-content: center; }
.ic { width: 24px; height: 24px; display: block; overflow: visible; }
.off .btn .ic, .off1 .ic { filter: grayscale(1) opacity(.62); }
.off .btn.on .ic { filter: none; }
.pressed {
  border: 1px solid #fff; border-top-color: #8c8c8c; border-left-color: #8c8c8c;
  background: repeating-conic-gradient(#d4d0c8 0 25%, #fff 0 50%) 0 0/2px 2px;
}
.arr { width: 12px; height: 31px; flex: none; position: relative; }
.arr::after {
  content: ""; position: absolute; left: 1px; top: 13px;
  border: 5px solid transparent; border-top: 5px solid #000; border-bottom: 0;
}
.arr-off::after { border-top-color: #a8a6a0; filter: drop-shadow(1px 1px #fff); }

.svgt { font-family: "DejaVu Sans", sans-serif; text-anchor: middle; }
.svgm { font-family: "DejaVu Sans Mono", monospace; text-anchor: middle; fill: #555; }
.svgs { font-family: "DejaVu Serif", serif; }
.svgg { font-family: "DejaVu Serif", serif; }
.svgi { font-family: "DejaVu Serif", serif; font-style: italic; font-weight: 700; text-anchor: middle; fill: #fff; }

.workspace { flex: 1; display: flex; min-height: 0; }
.dock { width: 472px; flex: none; display: flex; flex-direction: column; }
.panel { display: flex; flex-direction: column; }
.panel-layers { height: 329px; }
.panel-browser { flex: 1; min-height: 0; border-top: 1px solid #333; }
.ptitle { height: 21px; flex: none; display: flex; align-items: center; padding: 0 4px 0 2px; gap: 5px; }
.ptitle span { flex: 1; }
.panel-browser .ptitle { height: 20px; padding-bottom: 1px; }
.pbtn { width: 10px; height: 10px; flex: none; margin-top: -2px; }
.ptools {
  height: 26px; flex: none; display: flex; align-items: center; padding-left: 1.500px;
  border-top: 1px solid #fff; border-bottom: 1px solid #444;
  box-shadow: inset -1px 0 #888;
}
.pb { width: 23px; height: 22px; flex: none; display: flex; align-items: center; justify-content: center; }
.parr { width: 12px; height: 22px; }
.parr::after { top: 8px; }
.i16 { width: 16px; height: 16px; display: block; flex: none; overflow: visible; }

.tree {
  flex: 1; min-height: 0; position: relative; background: #fff;
  border: 2px solid #000; border-right-color: #cfcfcf; border-bottom-color: #efefef;
  border-right-width: 1px; border-bottom-width: 1px;
}
.tree-layers { margin-bottom: 5px; padding-top: 1px; }
.tree-browser { padding-top: 1px; }
.row { display: flex; height: 16px; align-items: stretch; white-space: nowrap; }
.c { width: 20px; flex: none; position: relative; }
.g { background: repeating-linear-gradient(#777 0 1px, transparent 1px 2px) 10px 0/1px 100% no-repeat; }
.tee {
  background:
    repeating-linear-gradient(#777 0 1px, transparent 1px 2px) 10px 0/1px 100% no-repeat,
    repeating-linear-gradient(90deg, #777 0 1px, transparent 1px 2px) 10px 7px/10px 1px no-repeat;
}
.end {
  background:
    repeating-linear-gradient(#777 0 1px, transparent 1px 2px) 10px 0/1px 8px no-repeat,
    repeating-linear-gradient(90deg, #777 0 1px, transparent 1px 2px) 10px 7px/10px 1px no-repeat;
}
.exp { position: absolute; left: 6px; top: 3px; width: 9px; height: 9px; border: 1px solid #777; background: #fff; }
.exp::before { content: ""; position: absolute; left: 1px; top: 3px; width: 5px; height: 1px; background: #000; }
.plus::after { content: ""; position: absolute; left: 3px; top: 1px; width: 1px; height: 5px; background: #000; }
.it { display: flex; align-items: center; gap: 6px; padding-left: 3px; }
.it-sel { background: #000080; color: #fff; }
.focus { outline: 1px dotted #fff; outline-offset: -1px; padding-right: 2px; margin-left: -1px; padding-left: 1px; }
.lay { flex: 1; display: flex; align-items: center; padding-left: 4px; }
.lay b { font-weight: 700; margin-left: 5px; }
.sel { background: #000080; color: #fff; margin-right: 2px; }
.chk {
  width: 13px; height: 13px; flex: none; border: 1px solid #000; background: #fff;
  position: relative; margin-right: 6px;
}
.chk::after {
  content: ""; position: absolute; left: 3.500px; top: 0; width: 5px; height: 9px;
  border: solid #000; border-width: 0 2px 2px 0; transform: rotate(40deg);
}
.sym { width: 16px; height: 1px; flex: none; }
.sym-r { background: #8b2a2a; }
.sym-t { background: #1fd0c0; height: 2px; }
.mouse { position: absolute; left: 230px; top: 184px; width: 14px; height: 21px; }

.map {
  flex: 1; margin-left: 4px; position: relative; background: #fff;
  border-left: 2px solid #000; border-top: 2px solid #000;
  border-bottom: 1px solid #e8e8e8;
}
.tracks { position: absolute; left: 0; top: 0; width: 1202px; height: 837px; display: block; }
.tracks path { fill: none; stroke: #1ecdb6; stroke-linejoin: round; }
.tracks .st { stroke-width: 1.200; }
.tracks .lt { stroke-width: 1; opacity: .72; }
.tracks .dot { stroke-width: 2; stroke-linecap: round; }

.status { height: 30px; flex: none; display: flex; align-items: center; padding-left: 430px; white-space: nowrap; }
.pause {
  width: 58px; height: 20px; display: flex; gap: 20px; padding: 0 1px;
  background: #d4d0c8;
  border: 1px solid #fff; border-top-color: #999; border-left-color: #999;
}
.pause i { width: 16px; background: #000080; }
.field {
  height: 20px; display: flex; align-items: center; position: relative; flex: none;
  background: #fff; border: 2px solid #000; border-right: 1px solid #eee; border-bottom: 1px solid #eee;
  padding-left: 3px;
}
.l-coord { margin-left: 216px; width: 67px; }
.f-coord { width: 162px; margin-left: 5px; justify-content: center; padding: 0 6px 0 0; }
.s-mouse { margin-left: 3px; }
.l-scale { margin-left: 15px; width: 43px; }
.f-scale { width: 105px; margin-left: 6px; }
.cbtn {
  position: absolute; right: 0; top: 0; width: 15px; height: 17px;
  background: #d4d0c8; border: 1px solid; border-color: #fff #555 #555 #fff;
}
.cbtn::after { content: ""; position: absolute; left: 3px; top: 6px; border: 4px solid transparent; border-top: 4px solid #000; border-bottom: 0; }
.s-lock { margin-left: 5px; }
.l-mag { margin-left: 13px; width: 29px; }
.f-mag { width: 81px; margin-left: 5px; }
.l-rot { margin-left: 12px; width: 40px; }
.f-rot { width: 82px; margin-left: 10px; }
.spin { position: absolute; right: 0; top: 0; width: 15px; height: 17px; display: flex; flex-direction: column; }
.spin i { flex: 1; background: #d4d0c8; border: 1px solid; border-color: #fff #555 #555 #fff; position: relative; }
.spin i::after { content: ""; position: absolute; left: 5px; top: 3px; width: 3px; height: 1px; background: #000; }
.s-chk { margin: 0 0 0 7px; }
.l-rend { margin-left: 6px; width: 77px; }
.s-crs { margin-left: 21px; }
.l-epsg { margin-left: 4px; width: 65px; }
.s-chat { margin-left: 23px; }
```
FILE: map.js
```js
(function () {
  var seed = 20480;
  function r() { seed = (seed * 1664525 + 1013904223) >>> 0; return seed / 4294967296; }
  function g() { return (r() + r() + r() - 1.5) / 1.5; }
  var strong = "", light = "", dots = "";
  var Z9 = { x: 940, y: 400, s: 3 }, Z10 = { x: 1120, y: 500, s: 2.904 };

  function line(pts, jit) {
    var d = "";
    for (var i = 0; i < pts.length - 1; i++) {
      var a = pts[i], b = pts[i + 1];
      var len = Math.hypot(b[0] - a[0], b[1] - a[1]);
      var n = Math.max(1, Math.ceil(len / 4));
      for (var k = 0; k < n; k++) {
        var t = k / n;
        var x = a[0] + (b[0] - a[0]) * t + (k ? (r() - .5) * jit : 0);
        var y = a[1] + (b[1] - a[1]) * t + (k ? (r() - .5) * jit : 0);
        d += (i === 0 && k === 0 ? "M" : "L") + x.toFixed(1) + " " + y.toFixed(1);
      }
    }
    var e = pts[pts.length - 1];
    return d + "L" + e[0].toFixed(1) + " " + e[1].toFixed(1);
  }
  function conv(z, flat) {
    var p = [];
    for (var i = 0; i < flat.length; i += 2) p.push([z.x + flat[i] / z.s, z.y + flat[i + 1] / z.s]);
    return p;
  }
  function S(z, flat) {
    var p = conv(z, flat);
    strong += line(p, 1.4);
    light += line(p, 3);
  }
  function L(z, flat) {
    var p = conv(z, flat);
    light += line(p, 1.8);
    if (r() < .4) light += line(p, 3.5);
  }
  /* a dense knot: chords that cross the centre and out to the ellipse, plus short walks */
  function core(z, X, Y, RX, RY, n, strongShare) {
    var cx = z.x + X / z.s, cy = z.y + Y / z.s, rx = 1.45 * RX / z.s, ry = 1.45 * RY / z.s;
    var i, d;
    var chords = Math.ceil(n * .55), walks = Math.ceil(n * .5);
    for (i = 0; i < chords; i++) {
      var a = r() * 6.283, b = a + 2.4 + r() * 1.5;
      var u = Math.pow(r(), 1.1), v = Math.pow(r(), 1.1);
      var p = [[cx + Math.cos(a) * rx * u, cy + Math.sin(a) * ry * u],
               [cx + g() * rx * .3, cy + g() * ry * .3],
               [cx + Math.cos(b) * rx * v, cy + Math.sin(b) * ry * v]];
      d = line(p, 2.2);
      if (r() < strongShare) strong += d; else light += d;
    }
    for (i = 0; i < walks; i++) {
      var x = cx + g() * rx * .7, y = cy + g() * ry * .7;
      d = "M" + x.toFixed(1) + " " + y.toFixed(1);
      var steps = 5 + Math.floor(r() * 7);
      for (var k = 0; k < steps; k++) {
        x += (r() - .5) * rx * .5 + (cx - x) * .1;
        y += (r() - .5) * ry * .5 + (cy - y) * .1;
        d += "L" + x.toFixed(1) + " " + y.toFixed(1);
      }
      if (r() < strongShare) strong += d; else light += d;
    }
  }
  /* a loose tangle: wandering strands that circle a wider ellipse */
  function mesh(z, X, Y, RX, RY, n, strongShare) {
    var cx = z.x + X / z.s, cy = z.y + Y / z.s, rx = RX / z.s, ry = RY / z.s;
    for (var i = 0; i < n; i++) {
      var a = r() * 6.283, p = [], m = 4 + Math.floor(r() * 4);
      for (var k = 0; k < m; k++) {
        var u = .35 + r() * .65;
        p.push([cx + Math.cos(a) * rx * u, cy + Math.sin(a) * ry * u]);
        a += (r() < .5 ? -1 : 1) * (.5 + r() * 1.1);
      }
      var d = line(p, 1.8);
      if (r() < strongShare) strong += d; else light += d;
    }
  }

  /* central cluster */
  core(Z9, 665, 350, 95, 34, 230, .8);
  core(Z9, 660, 352, 48, 22, 70, 1);
  mesh(Z9, 660, 350, 150, 70, 22, .5);
  [[625,250,632,265,620,295,640,320],[705,250,718,265,715,300,700,330],[530,295,535,315,560,325],[800,303,740,312,680,340],
   [510,355,560,335,620,345],[505,335,560,320,640,340]].forEach(function (a) { S(Z9, a); });
  [[505,408,570,390,600,370,640,360],[515,475,518,450,560,425,590,415,620,395],[540,420,600,390],
   [700,535,698,490,715,465,745,445,790,460,800,490,815,505],[690,400,720,430,745,445],
   [760,345,820,340,860,345,845,375,835,405,815,412,790,395,760,375],[860,358,900,362,950,370],
   [600,290,660,300,700,310],[620,395,660,405,700,385]].forEach(function (a) { L(Z9, a); });
  S(Z9, [505,410,545,405,590,395,625,375]);
  /* left star */
  core(Z9, 305, 450, 30, 22, 70, .85);
  mesh(Z9, 290, 455, 70, 50, 10, .4);
  [[115,482,155,487,165,470,260,465],[250,590,268,578,280,540,270,515,300,470],[175,527,215,508,260,490,290,470],
   [228,530,250,510,275,495],[185,410,205,425,240,435,290,450],[265,375,270,410,300,440],[360,430,335,435,310,450],
   [345,482,320,478,300,460],[230,470,260,485,250,450]].forEach(function (a) { L(Z9, a); });
  /* top-left mesh */
  mesh(Z9, 470, 195, 95, 55, 10, .5);
  [[380,175,400,165,435,160,500,150,565,150],[430,155,480,170,530,150],[380,195,410,205,470,215,530,215,565,195],
   [385,175,410,205,440,235,470,250,510,240,535,240],[410,215,450,240,490,225,530,240]].forEach(function (a) { S(Z9, a); });
  [[520,150,545,165,530,190,510,215],[400,165,420,195,470,180,510,165],[440,205,480,185,520,180],[380,180,420,225,470,235,535,235]].forEach(function (a) { L(Z9, a); });
  /* top star */
  core(Z9, 920, 130, 28, 10, 24, .9);
  mesh(Z9, 910, 130, 70, 60, 6, .3);
  S(Z9, [825,97,860,110,900,125,960,127]); S(Z9, [880,180,945,178]);
  [[865,45,858,75,875,95,890,120,920,130],[900,100,915,130,890,145,895,170,910,210,950,210],
   [940,130,985,145,985,165,960,180,905,175],[870,110,880,95,900,90,930,115,945,130]].forEach(function (a) { L(Z9, a); });
  mesh(Z9, 1030, 165, 40, 30, 4, .4);
  L(Z9, [990,183,1020,170,1050,135,1055,165,1070,155,1030,145,1005,155,1020,165,1040,175,1020,190,1000,198,990,185]);
  S(Z9, [1005,180,1030,175,1060,168]);
  L(Z9, [583,125,597,112,615,127,600,140,585,130,583,125]); L(Z9, [610,128,625,125]);
  S(Z9, [660,107,680,108,690,135,710,145]); S(Z9, [700,122,740,125,800,137]); L(Z9, [765,150,775,138]);
  L(Z9, [145,245,157,243,153,252]); L(Z9, [245,242,270,245,295,258]); S(Z9, [55,373,78,380,95,390]);
  /* right star */
  core(Z9, 1135, 315, 32, 20, 55, .85);
  core(Z9, 1110, 358, 22, 10, 22, 1);
  mesh(Z9, 1120, 340, 70, 70, 10, .5);
  S(Z9, [1160,260,1130,285,1120,320,1110,350,1125,385]); S(Z9, [1012,355,1060,360,1110,350]); S(Z9, [1070,390,1100,370,1120,350]);
  L(Z9, [1170,405,1140,390,1120,365]); L(Z9, [1125,385,1135,425,1120,442,1135,438]); L(Z9, [1190,240,1198,265]);
  /* curly cluster */
  core(Z9, 955, 418, 32, 26, 34, .6);
  mesh(Z9, 955, 420, 60, 48, 14, .6);
  L(Z9, [895,435,905,400,950,380,1018,380,1010,410,990,440,940,470,920,445,895,435]);
  /* V */
  S(Z9, [590,635,585,655,650,680,680,710,700,690,755,645]); core(Z9, 680, 710, 12, 8, 14, 1);
  L(Z9, [645,710,680,715,720,705,770,675,840,660,860,650]); L(Z9, [680,735,680,710]);
  core(Z9, 870, 645, 16, 12, 16, 1); S(Z9, [880,605,870,650,930,665,985,680]);
  mesh(Z9, 870, 650, 40, 30, 4, .5);
  L(Z9, [985,680,950,682,900,695,870,670,850,660]);
  S(Z9, [572,590,572,603]); S(Z9, [875,312,880,315]);

  /* star with loops */
  core(Z10, 495, 265, 12, 12, 14, 1);
  mesh(Z10, 500, 265, 60, 50, 6, .3);
  L(Z10, [495,265,470,240,420,240,418,265,440,280,490,265,510,230,490,200,495,167,530,168,560,190,545,215,530,245,500,265]);
  S(Z10, [530,245,545,215,580,197]);
  S(Z10, [495,265,500,300,540,320,590,330,585,355]);
  L(Z10, [490,280,470,320,500,360,490,365]); L(Z10, [500,280,540,290,520,345]);
  L(Z10, [580,197,610,190,630,170,660,190,640,215,610,230,590,215,600,190,650,215]);
  core(Z10, 620, 212, 30, 8, 14, .8);
  mesh(Z10, 620, 205, 40, 25, 6, .4);
  S(Z10, [428,310,435,330,452,343]); L(Z10, [640,330,655,325,675,335,650,335,640,330]);
  S(Z10, [750,70,755,88]); S(Z10, [940,80,965,55]); S(Z10, [1095,72,1102,74]); L(Z10, [826,97,850,115,905,112]);
  /* lower middle star */
  core(Z10, 820, 335, 50, 28, 90, .85);
  mesh(Z10, 820, 335, 85, 55, 14, .5);
  L(Z10, [840,240,860,205,845,175,830,170,850,145,860,155,835,143,830,175]);
  L(Z10, [775,265,835,240,835,290,825,320]); S(Z10, [790,263,820,270]);
  L(Z10, [710,295,730,315,790,315]); L(Z10, [930,315,890,320,860,330]);
  L(Z10, [905,395,880,370,850,350]); L(Z10, [850,385,905,398]); L(Z10, [740,350,770,365,790,385]); L(Z10, [880,223,895,225]);
  /* right side */
  core(Z10, 1040, 200, 25, 15, 28, .85);
  mesh(Z10, 1040, 205, 55, 45, 8, .5);
  S(Z10, [1020,140,1040,180]); S(Z10, [980,248,1000,250]); L(Z10, [980,245,985,215,1020,205]); L(Z10, [1060,250,1000,250]); L(Z10, [1090,175,1070,170,1060,195]);
  core(Z10, 1135, 235, 48, 9, 24, .9);
  mesh(Z10, 1135, 235, 55, 35, 8, .5);
  L(Z10, [1085,240,1090,270,1150,262,1250,235]); L(Z10, [1090,215,1150,195,1190,215,1190,235]); L(Z10, [1060,210,1105,215]);
  core(Z10, 1350, 130, 30, 22, 50, .85);
  mesh(Z10, 1350, 140, 100, 55, 14, .5);
  S(Z10, [1240,92,1290,105,1350,130,1450,115]); S(Z10, [1360,85,1350,130]); S(Z10, [1455,165,1500,190]);
  L(Z10, [1280,150,1300,120,1340,100,1420,100,1455,120,1500,190]); L(Z10, [1280,200,1350,150,1430,205]);
  L(Z10, [1455,175,1470,210,1485,190]); L(Z10, [1390,150,1450,130]);
  core(Z10, 1300, 225, 44, 14, 34, .9);
  mesh(Z10, 1330, 225, 90, 45, 14, .5);
  L(Z10, [1250,240,1290,200,1340,205,1380,200,1420,250,1390,265,1340,250,1300,255,1255,245]);
  S(Z10, [1240,170,1260,190,1250,240,1260,290,1295,303]);
  S(Z10, [1260,200,1300,180,1350,140]);
  core(Z10, 1150, 325, 50, 9, 30, 1);
  mesh(Z10, 1130, 340, 90, 55, 14, .5);
  S(Z10, [1065,285,1080,320,1100,350,1080,395]); L(Z10, [1080,395,1060,425]); S(Z10, [1180,270,1130,300,1100,320]); S(Z10, [1230,310,1170,330]);
  L(Z10, [1040,365,1070,340,1110,340]); L(Z10, [1040,365,1060,390,1100,385]); L(Z10, [1100,350,1170,350,1175,380,1130,395,1090,385]);
  L(Z10, [800,445,830,430,880,440,870,425,840,435,820,445]);
  S(Z10, [820,445,830,475,870,480,910,455,895,480,915,487,945,485,955,460,1010,445,1045,440]);
  L(Z10, [1110,440,1115,425,1180,405,1250,360,1270,358,1248,345]);
  L(Z10, [610,455,640,450,632,430,645,458,620,468,610,455]);
  dots = "M1480 708h.5M900 634.500h3M1498 525h.5";

  var svg = document.getElementById("tracks");
  var NS = "http://www.w3.org/2000/svg";
  [["lt", light], ["st", strong], ["dot", dots]].forEach(function (p) {
    var el = document.createElementNS(NS, "path");
    el.setAttribute("class", p[0]);
    el.setAttribute("d", p[1]);
    svg.appendChild(el);
  });
})();
```
